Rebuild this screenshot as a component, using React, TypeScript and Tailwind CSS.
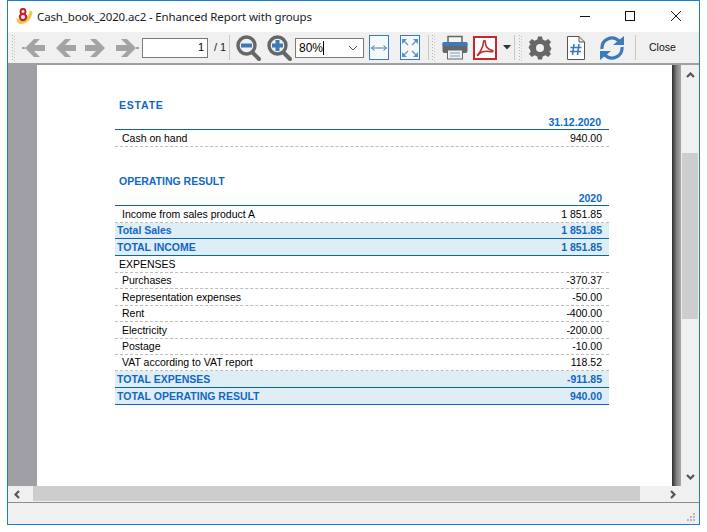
const Grip = ({ className = "" }: { className?: string }) => (
  <svg width="3" height="26" viewBox="0 0 3 26" className={`shrink-0 ${className}`}>
    {Array.from({ length: 9 }).map((_, i) => (
      <g key={i}>
        <rect x="0" y={i * 3} width="1" height="1" fill="#b8b8b8" />
        <rect x="2" y={i * 3 + 1} width="1" height="1" fill="#c8c8c8" />
      </g>
    ))}
  </svg>
);

const Sep = ({ className = "" }: { className?: string }) => (
  <div className={`h-[25px] w-px shrink-0 bg-[#c8c8c8] ${className}`} />
);

const ArrowL = ({ stub, className = "" }: { stub?: boolean; className?: string }) => (
  <svg width="24" height="20" viewBox="0 0 24 20" className={`mt-[1px] shrink-0 ${className}`}>
    {stub && <rect x="0" y="9" width="3" height="2" fill="#a3a3a3" />}
    <path d="M3 10 L12 1 L18 1 L12 7 L23 7 L23 13 L12 13 L18 19 L12 19 Z" fill="#a3a3a3" />
  </svg>
);

const ArrowR = ({ stub, className = "" }: { stub?: boolean; className?: string }) => (
  <svg width="24" height="20" viewBox="0 0 24 20" className={`mt-[1px] shrink-0 ${className}`}>
    {stub && <rect x="21" y="9" width="3" height="2" fill="#a3a3a3" />}
    <path d="M21 10 L12 1 L6 1 L12 7 L1 7 L1 13 L12 13 L6 19 L12 19 Z" fill="#a3a3a3" />
  </svg>
);

const Magnifier = ({ plus, className = "" }: { plus?: boolean; className?: string }) => (
  <svg width="25" height="26" viewBox="0 0 25 26" className={`shrink-0 ${className}`}>
    <path d="M16 17 L23 24" stroke="#666" strokeWidth="4" strokeLinecap="round" />
    <circle cx="10.5" cy="10.5" r="8.5" fill="#eef2f6" stroke="#666" strokeWidth="3.4" />
    <rect x="5" y="8.5" width="11" height="4" fill="#3d7ab8" />
    {plus && <rect x="8.5" y="5" width="4" height="11" fill="#3d7ab8" />}
  </svg>
);

const Row = ({
  label,
  value,
  kind = "normal",
  h,
}: {
  label: string;
  value?: string;
  kind?: "normal" | "group" | "total";
  h: string;
}) => {
  const base = `flex items-center justify-between ${h}`;
  if (kind === "normal")
    return (
      <div className={`${base} border-b border-dashed border-[#bdbdbd] px-[7px] text-black`}>
        <span>{label}</span>
        <span>{value}</span>
      </div>
    );
  if (kind === "group")
    return (
      <div className={`${base} border-b border-dashed border-[#bdbdbd] pl-[4px] text-black`}>
        <span>{label}</span>
      </div>
    );
  return (
    <div className={`${base} border-b border-[#0a64b8] bg-[#dfedf5] pl-[2px] pr-[7px] font-bold text-[#0f68c8]`}>
      <span>{label}</span>
      <span>{value}</span>
    </div>
  );
};

export default function App() {
  return (
    <div className="h-[532px] w-[707px] overflow-hidden bg-white pl-[7px] font-['Liberation_Sans',Arial,sans-serif]">
      <div className="flex h-[525px] w-[693px] flex-col border border-[#1a7fd4] bg-white">
        {/* Title bar */}
        <div className="flex h-[31px] shrink-0 items-center bg-white pl-[8px]">
          <svg width="17" height="17" viewBox="0 0 17 17" className="shrink-0">
            <path d="M0.5 9.5 C4 14 12 11 14 2.5 L16.5 3.5 C16.5 12 8 18 2.5 15.5 C1 14.8 0.5 12 0.5 9.5 Z" fill="#ecc94b" />
            <circle cx="7" cy="3.4" r="2.5" fill="#fff" stroke="#c8202c" strokeWidth="2" />
            <circle cx="7" cy="9" r="3.1" fill="#fff" stroke="#c8202c" strokeWidth="2.2" />
          </svg>
          <span className="ml-[4px] whitespace-nowrap font-['Noto_Sans',sans-serif] text-[11.5px] tracking-[-0.14px] text-[#1a1a1a]">
            Cash_book_2020.ac2 - Enhanced Report with groups
          </span>
          <div className="mb-[2px] ml-auto flex items-center">
            <svg width="12" height="12" viewBox="0 0 12 12" className="mr-[33px]">
              <path d="M1 6.5 H11" stroke="#111" strokeWidth="1" />
            </svg>
            <svg width="12" height="12" viewBox="0 0 12 12" className="mr-[34px]">
              <rect x="1.5" y="1.5" width="9" height="9" fill="none" stroke="#111" strokeWidth="1" />
            </svg>
            <svg width="12" height="12" viewBox="0 0 12 12" className="mr-[17px]">
              <path d="M1 1 L11 11 M11 1 L1 11" stroke="#111" strokeWidth="1" />
            </svg>
          </div>
        </div>

        {/* Toolbar */}
        <div className="flex h-[33px] shrink-0 items-center border-b-2 border-[#a0a0a0] bg-[#f0f0f0] text-[11px]">
          <Grip className="ml-[4px]" />
          <ArrowL stub className="ml-[7px]" />
          <ArrowL className="ml-[7px]" />
          <ArrowR className="ml-[7px]" />
          <ArrowR stub className="ml-[7px]" />
          <div className="ml-[3px] flex h-[20px] w-[66px] shrink-0 items-center justify-end border border-[#7a7a7a] bg-white pr-[3px] text-[11px] text-black">
            1
          </div>
          <span className="ml-[6px] w-[15px] shrink-0 whitespace-nowrap text-[11px] text-[#222]">/ 1</span>
          <Sep />
          <Magnifier className="ml-[6px]" />
          <Magnifier plus className="ml-[6px]" />
          <div className="ml-[3px] flex h-[20px] w-[69px] shrink-0 items-center border border-[#7a7a7a] bg-white pl-[3px] pr-[5px] text-[12px] text-black">
            <span>80%</span>
            <span className="h-[14px] w-px bg-black" />
            <svg width="10" height="6" viewBox="0 0 10 6" className="ml-auto">
              <path d="M1 1 L5 5 L9 1" fill="none" stroke="#555" strokeWidth="1" />
            </svg>
          </div>
          <div className="ml-[5px] flex h-[25px] w-[20px] shrink-0 items-center justify-center border border-[#3d7ab8] bg-[#f6f9fc]">
            <svg width="16" height="8" viewBox="0 0 16 8">
              <path d="M0.5 4 H15.5 M3.5 1.5 L0.5 4 L3.5 6.5 M12.5 1.5 L15.5 4 L12.5 6.5" fill="none" stroke="#3d7ab8" strokeWidth="1" />
            </svg>
          </div>
          <div className="ml-[11px] flex h-[25px] w-[20px] shrink-0 items-center justify-center border border-[#3d7ab8] bg-[#f6f9fc]">
            <svg width="18" height="20" viewBox="0 0 18 20">
              <path d="M2 2 L7 7 M16 2 L11 7 M2 18 L7 13 M16 18 L11 13" stroke="#5a92c8" strokeWidth="1.2" />
              <path d="M1 1 H6 L1 6 Z M17 1 H12 L17 6 Z M1 19 H6 L1 14 Z M17 19 H12 L17 14 Z" fill="#5a92c8" />
            </svg>
          </div>
          <Sep className="ml-[8px]" />
          <Grip className="ml-[3px]" />
          <svg width="26" height="25" viewBox="0 0 26 25" className="ml-[7px] shrink-0">
            <path d="M6 8 V1.5 H20 V8" fill="#f4f4f4" stroke="#666" strokeWidth="1.5" />
            <rect x="0.5" y="7" width="25" height="11" rx="2" fill="#666" />
            <rect x="0.5" y="7" width="25" height="4" rx="1.5" fill="#3d7ab8" />
            <rect x="5.5" y="15" width="15" height="9" fill="#eef2f6" stroke="#666" strokeWidth="1" />
            <path d="M8 18 H18 M8 21 H18" stroke="#7d9dbc" strokeWidth="1" />
          </svg>
          <div className="ml-[5px] flex h-[24px] w-[24px] shrink-0 items-center justify-center border-2 border-[#c8282c] bg-white">
            <svg width="18" height="18" viewBox="0 0 18 18">
              <path
                d="M1.5 16 C4 14 7 8 7.5 3 C7.6 1 9.3 1 9.3 3 C9.3 7 12 10.5 16.5 11.5 C17.5 12 16.5 13 15 12.7 C11 12 6 12.5 3.5 14.5 C2.5 15.5 1.5 17 1.5 16 Z"
                fill="none"
                stroke="#c8282c"
                strokeWidth="1.6"
              />
            </svg>
          </div>
          <svg width="8" height="5" viewBox="0 0 8 5" className="ml-[6px] shrink-0">
            <path d="M0 0 H8 L4 4.5 Z" fill="#333" />
          </svg>
          <Sep className="ml-[3px]" />
          <Grip className="ml-[4px]" />
          <svg width="24" height="24" viewBox="0 0 24 24" className="ml-[6px] shrink-0">
            <path
              d="M10 0.5 H14 L14.7 3.6 L17.4 4.7 L20.1 3 L23 5.9 L21.3 8.6 L22.4 11.3 L23.5 12 L22.4 14.7 L21.3 15.4 L23 18.1 L20.1 21 L17.4 19.3 L14.7 20.4 L14 23.5 H10 L9.3 20.4 L6.6 19.3 L3.9 21 L1 18.1 L2.7 15.4 L1.6 12.7 L0.5 12 L1.6 9.3 L2.7 8.6 L1 5.9 L3.9 3 L6.6 4.7 L9.3 3.6 Z"
              fill="#666"
            />
            <circle cx="12" cy="12" r="4" fill="#f0f0f0" />
          </svg>
          <svg width="18" height="24" viewBox="0 0 18 24" className="ml-[15px] shrink-0">
            <path d="M0.5 0.5 H12 L17.5 6 V23.5 H0.5 Z M12 0.5 V6 H17.5" fill="#fff" stroke="#555" strokeWidth="1" />
            <path d="M7 8 L5.5 19 M12 8 L10.5 19 M3.5 11.5 H14.5 M3 15.5 H14" stroke="#3d7ab8" strokeWidth="1.6" fill="none" />
          </svg>
          <svg width="26" height="26" viewBox="0 0 26 26" className="ml-[14px] shrink-0">
            <path d="M3 14 A10 10 0 0 1 20 6" fill="none" stroke="#3d7ab8" strokeWidth="3.2" />
            <path d="M23 12 A10 10 0 0 1 6 20" fill="none" stroke="#3d7ab8" strokeWidth="3.2" />
            <path d="M14 10 H25 V1 Z" fill="#3d7ab8" />
            <path d="M12 16 H1 V25 Z" fill="#3d7ab8" />
          </svg>
          <Sep className="ml-[10px]" />
          <span className="ml-[13px] mt-[1px] whitespace-nowrap text-[10.5px] text-[#111]">Close</span>
        </div>

        {/* Viewer */}
        <div className="flex h-[421px] shrink-0">
          <div className="w-[29px] shrink-0 bg-[#a0a0a4]" />
          <div className="w-[635px] shrink-0 bg-white pl-[78px] pt-[35px] text-[10.5px] leading-none">
            <div className="w-[494px]">
              <div className="h-[14px] pl-[4px] font-bold tracking-[0.8px] text-[#0f68c8]">ESTATE</div>
              <div className="flex h-[16px] items-end justify-end border-b border-[#0a64b8] pb-[2px] pr-[8px] font-bold text-[#0f68c8]">
                31.12.2020
              </div>
              <Row label="Cash on hand" value="940.00" h="h-[17px]" />
              <div className="flex h-[45px] items-end pb-[6px] pl-[4px] font-bold text-[#0f68c8]">
                OPERATING RESULT
              </div>
              <div className="flex h-[14px] items-end justify-end border-b border-[#0a64b8] pb-[2px] pr-[7px] font-bold text-[#0f68c8]">
                2020
              </div>
              <Row label="Income from sales product A" value="1 851.85" h="h-[17px]" />
              <Row label="Total Sales" value="1 851.85" kind="total" h="h-[16px]" />
              <Row label="TOTAL INCOME" value="1 851.85" kind="total" h="h-[17px]" />
              <Row label="EXPENSES" kind="group" h="h-[17px]" />
              <Row label="Purchases" value="-370.37" h="h-[16px]" />
              <Row label="Representation expenses" value="-50.00" h="h-[17px]" />
              <Row label="Rent" value="-400.00" h="h-[16px]" />
              <Row label="Electricity" value="-200.00" h="h-[17px]" />
              <Row label="Postage" value="-10.00" h="h-[16px]" />
              <Row label="VAT according to VAT report" value="118.52" h="h-[16px]" />
              <Row label="TOTAL EXPENSES" value="-911.85" kind="total" h="h-[17px]" />
              <Row label="TOTAL OPERATING RESULT" value="940.00" kind="total" h="h-[17px]" />
            </div>
          </div>
          <div className="w-[9px] shrink-0 bg-gradient-to-r from-[#2e2e2e] via-[#808080] to-[#a8a8a8]" />
          <div className="flex w-[18px] shrink-0 flex-col items-center bg-[#f0f0f0]">
            <svg width="9" height="6" viewBox="0 0 9 6" className="mt-[7px] shrink-0">
              <path d="M1 5 L4.5 1.5 L8 5" fill="none" stroke="#555" strokeWidth="2.2" />
            </svg>
            <div className="mt-[75px] h-[166px] w-[16px] shrink-0 bg-[#cdcdcd]" />
            <svg width="9" height="6" viewBox="0 0 9 6" className="mb-[6px] mt-auto shrink-0">
              <path d="M1 1 L4.5 4.5 L8 1" fill="none" stroke="#555" strokeWidth="2.2" />
            </svg>
          </div>
        </div>

        {/* Horizontal scrollbar */}
        <div className="flex h-[16px] shrink-0 items-center bg-[#f0f0f0]">
          <svg width="6" height="9" viewBox="0 0 6 9" className="ml-[6px] shrink-0">
            <path d="M5 1 L1.5 4.5 L5 8" fill="none" stroke="#555" strokeWidth="2.2" />
          </svg>
          <div className="ml-[13px] h-[15px] w-[607px] shrink-0 self-start bg-[#cdcdcd]" />
          <svg width="6" height="9" viewBox="0 0 6 9" className="ml-[30px] shrink-0">
            <path d="M1 1 L4.5 4.5 L1 8" fill="none" stroke="#555" strokeWidth="2.2" />
          </svg>
        </div>

        {/* Status bar */}
        <div className="flex flex-1 items-end justify-end border-t border-[#8c8c96] bg-[#f0f0f0] pb-[2px] pr-[3px]">
          <svg width="9" height="9" viewBox="0 0 9 9">
            <path d="M6 0 h2 v2 h-2 Z M3 3 h2 v2 h-2 Z M6 3 h2 v2 h-2 Z M0 6 h2 v2 h-2 Z M3 6 h2 v2 h-2 Z M6 6 h2 v2 h-2 Z" fill="#b8b8b8" />
          </svg>
        </div>
      </div>
    </div>
  );
}
